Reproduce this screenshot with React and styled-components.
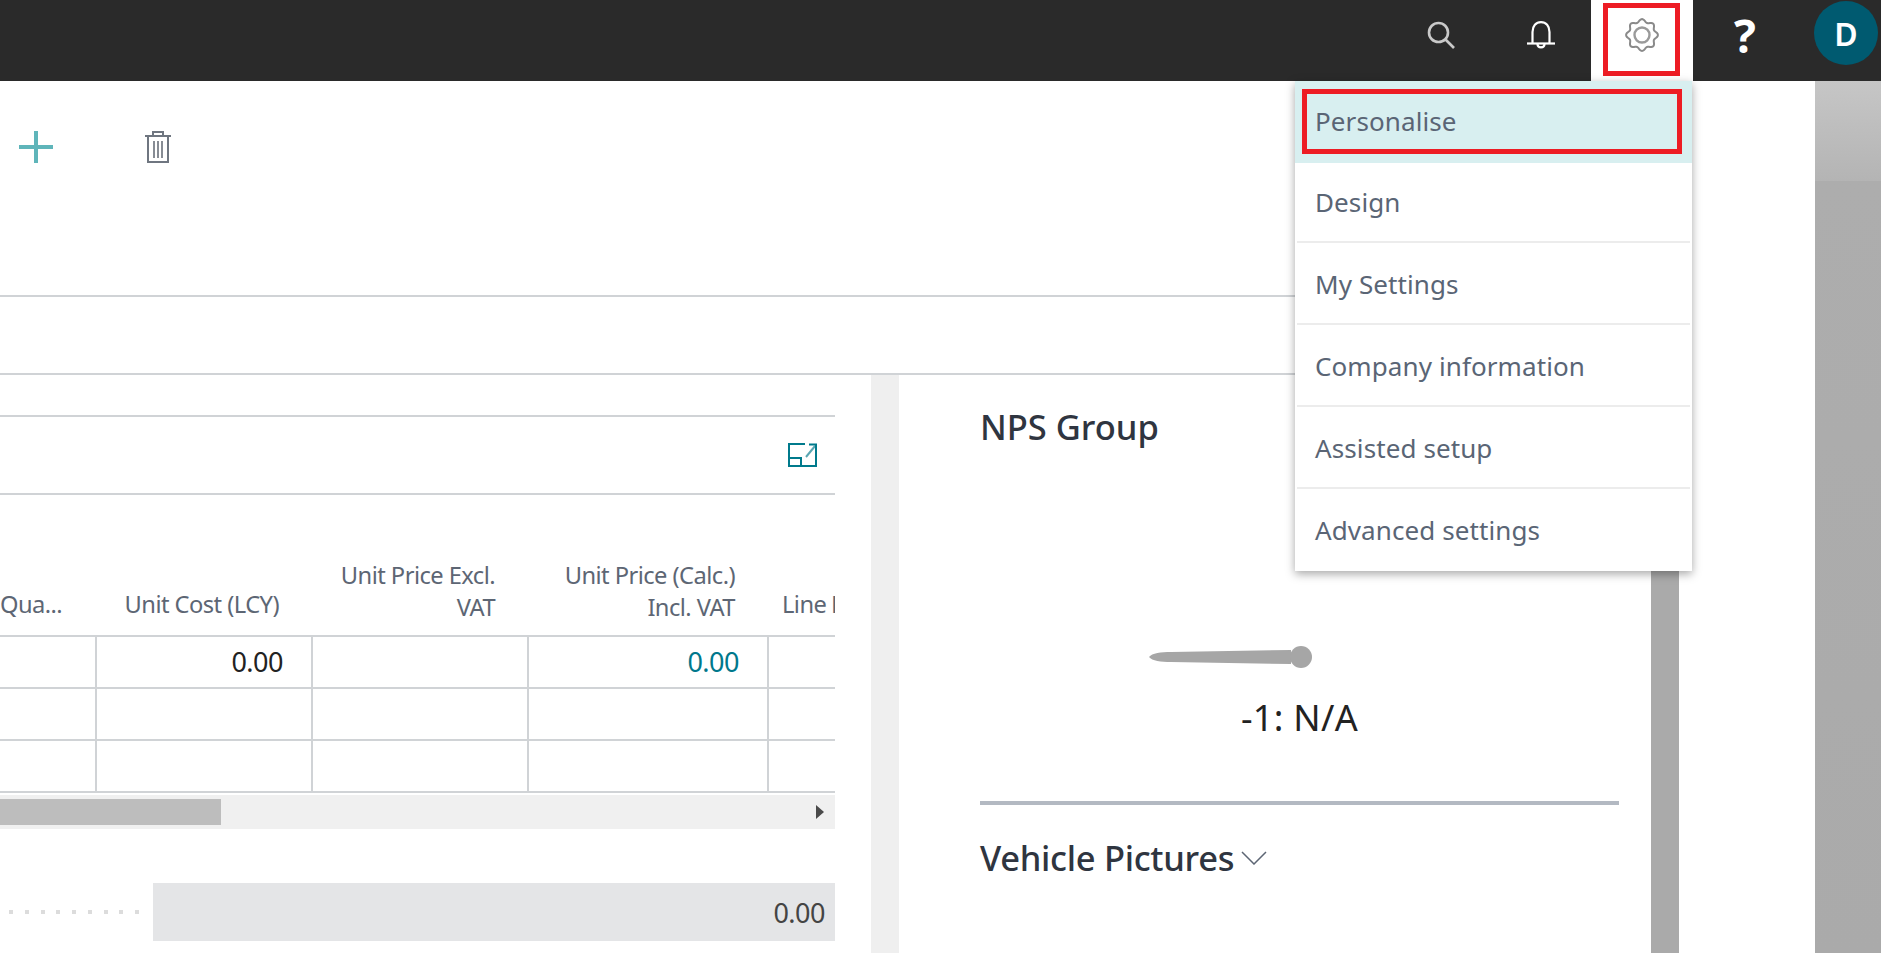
import React from "react";
import styled, { createGlobalStyle } from "styled-components";

const GlobalStyle = createGlobalStyle`
  html, body {
    margin: 0;
    padding: 0;
    background: #fff;
    overflow: hidden;
  }
  * { box-sizing: border-box; }
`;

const FONT = `"Noto Sans", "Open Sans", "Liberation Sans", sans-serif`;

const Page = styled.div`
  position: relative;
  width: 1881px;
  height: 953px;
  overflow: hidden;
  font-family: ${FONT};
  display: flex;
  flex-direction: column;
`;

// top bar
const TopBar = styled.header`
  height: 81px;
  flex: none;
  background: #2a2a2a;
  display: flex;
  justify-content: flex-end;
`;

const BarCell = styled.div`
  width: ${(p) => p.$w}px;
  display: flex;
  align-items: center;
  justify-content: center;
  padding-bottom: 11px;
  position: relative;
  background: ${(p) => (p.$active ? "#fff" : "transparent")};
`;

const AvatarCell = styled.div`
  width: 86px;
  display: flex;
  align-items: flex-start;
  justify-content: flex-end;
  padding: 1px 3px 0 0;
`;

const HelpMark = styled.span`
  color: #fff;
  font-family: "Open Sans", sans-serif;
  font-size: 46px;
  font-weight: 700;
  line-height: 1;
  margin-left: 2px;
`;

const Avatar = styled.div`
  width: 64px;
  height: 64px;
  border-radius: 50%;
  background: #005a70;
  color: #fff;
  font-size: 32px;
  font-weight: 600;
  display: flex;
  align-items: center;
  justify-content: center;
`;

const RedBox = styled.div`
  position: absolute;
  top: ${(p) => p.$top}px;
  left: ${(p) => p.$left}px;
  width: ${(p) => p.$w}px;
  height: ${(p) => p.$h}px;
  border: 5px solid #ed1c24;
  pointer-events: none;
`;

// page body
const Body = styled.div`
  flex: 1;
  display: flex;
  min-height: 0;
`;

const Workspace = styled.div`
  width: 1815px;
  flex: none;
  display: flex;
  flex-direction: column;
`;

const SideStrip = styled.div`
  flex: 1;
  background: linear-gradient(180deg, #c6c6c6 0, #b4b4b4 100px, #adadad 100px, #aaaaaa 100%);
`;

const ActionBar = styled.div`
  width: 1679px;
  height: 216px;
  flex: none;
  border-bottom: 2px solid #d0d3d6;
  display: flex;
  align-items: flex-start;
  padding: 50px 0 0 19px;
  gap: 90px;
`;

const SubBar = styled.div`
  width: 1679px;
  height: 78px;
  flex: none;
  border-bottom: 2px solid #d0d3d6;
`;

const Columns = styled.div`
  flex: 1;
  display: flex;
  min-height: 0;
`;

const LeftPane = styled.div`
  width: 871px;
  flex: none;
  padding: 40px 36px 0 0;
`;

const Gutter = styled.div`
  width: 28px;
  flex: none;
  background: #efefef;
`;

const RightPane = styled.div`
  width: 752px;
  flex: none;
  padding: 30px 32px 0 81px;
  display: flex;
  flex-direction: column;
`;

const PaneScroll = styled.div`
  width: 28px;
  flex: none;
  background: #aaaaaa;
`;

// lines section
const SectionHead = styled.div`
  height: 80px;
  border-top: 2px solid #d0d3d6;
  border-bottom: 2px solid #d0d3d6;
  display: flex;
  align-items: center;
  justify-content: flex-end;
  padding: 0 18px 0 0;
`;

const LinesGrid = styled.div`
  display: grid;
  grid-template-columns: 97px 216px 216px 240px 66px;
  overflow: hidden;
`;

const HeadCell = styled.div`
  height: 142px;
  border-bottom: 2px solid #d0d3d6;
  display: flex;
  align-items: flex-end;
  justify-content: ${(p) => (p.$left ? "flex-start" : "flex-end")};
  text-align: ${(p) => (p.$left ? "left" : "right")};
  white-space: nowrap;
  overflow: hidden;
  padding: 0 ${(p) => (p.$left ? 0 : 34)}px ${(p) => (p.$single ? 15 : 12)}px ${(p) => p.$pl || 0}px;
  font-size: 23.7px;
  line-height: 32px;
  color: #5d6674;
  letter-spacing: -0.55px;
  word-spacing: ${(p) => (p.$left ? -1 : 0)}px;
`;

const Cell = styled.div`
  height: 52px;
  border-bottom: 2px solid #d0d3d6;
  border-right: ${(p) => (p.$last ? "none" : "2px solid #d0d3d6")};
  display: flex;
  align-items: center;
  justify-content: flex-end;
  padding: 0 28px 2px 0;
  font-size: 27px;
  letter-spacing: -0.5px;
  color: ${(p) => (p.$link ? "#00788c" : "#222")};
`;

const HScroll = styled.div`
  height: 34px;
  margin-top: 2px;
  background: #f0f0f0;
  display: flex;
  align-items: center;
  justify-content: space-between;
  padding-right: 11px;
`;

const HThumb = styled.div`
  width: 221px;
  height: 26px;
  background: #bdbdbd;
`;

const ArrowRight = styled.div`
  width: 0;
  height: 0;
  border-top: 7px solid transparent;
  border-bottom: 7px solid transparent;
  border-left: 8px solid #4a4a4a;
`;

const TotalRow = styled.div`
  margin-top: 54px;
  display: flex;
  align-items: center;
`;

const Dots = styled.div`
  width: 153px;
  padding: 0 14px 0 9px;
  height: 4px;
  display: flex;
  justify-content: space-between;
`;

const Dot = styled.span`
  width: 4px;
  height: 4px;
  background: #dcdcdc;
`;

const TotalField = styled.div`
  flex: 1;
  height: 58px;
  background: #e4e5e7;
  display: flex;
  align-items: center;
  justify-content: flex-end;
  padding-right: 10px;
  font-size: 27px;
  letter-spacing: -0.5px;
  color: #444;
`;

// right pane
const PaneTitle = styled.div`
  font-size: 34.5px;
  line-height: 44px;
  font-weight: 500;
  color: #2f3540;
  display: flex;
  align-items: center;
  gap: 7px;
  letter-spacing: ${(p) => (p.$tight ? -0.3 : 0)}px;
`;

const GaugeBlock = styled.div`
  margin-top: 195px;
  display: flex;
  flex-direction: column;
  align-items: center;
`;

const GaugeValue = styled.div`
  margin-top: 24px;
  font-size: 36px;
  line-height: 48px;
  letter-spacing: 0.3px;
  color: #222;
`;

const PaneRule = styled.div`
  height: 4px;
  margin-top: 59px;
  margin-bottom: 31px;
  background: #b3b9c2;
`;

// settings menu
const Menu = styled.div`
  position: absolute;
  top: 81px;
  left: 1295px;
  width: 397px;
  height: 490px;
  background: #fff;
  box-shadow: 0 3px 9px rgba(0, 0, 0, 0.35);
  display: flex;
  flex-direction: column;
`;

const MenuItem = styled.div`
  height: ${(p) => p.$h}px;
  display: flex;
  align-items: center;
  padding-left: 20px;
  padding-bottom: ${(p) => p.$pb}px;
  font-size: 26px;
  letter-spacing: 0.1px;
  color: #5a6575;
  position: relative;
  background: ${(p) => (p.$active ? "#d8eff0" : "transparent")};

  &::after {
    content: "";
    display: ${(p) => (p.$noLine ? "none" : "block")};
    position: absolute;
    left: 2px;
    right: 2px;
    bottom: 0;
    height: 2px;
    background: #ececec;
  }
`;

const gearPath = (() => {
  const pts = [];
  for (let i = 0; i < 96; i++) {
    const a = (i / 96) * Math.PI * 2;
    const r = 14.4 + 1.5 * Math.cos(8 * a);
    pts.push(`${(17 + r * Math.sin(a)).toFixed(2)} ${(17 - r * Math.cos(a)).toFixed(2)}`);
  }
  return `M${pts.join("L")}Z`;
})();

const SearchIcon = () => (
  <svg width="28" height="28" viewBox="0 0 28 28" fill="none" stroke="#c9c9c9" strokeWidth="2.6">
    <circle cx="11.5" cy="11.5" r="9.5" />
    <path d="M18.5 18.5 L27 27" />
  </svg>
);

const BellIcon = () => (
  <svg width="28" height="28" viewBox="0 0 28 28" fill="none" stroke="#fff" strokeWidth="2.2">
    <path d="M5.5 22 V11 C5.5 5 9 1.2 14 1.2 C19 1.2 22.5 5 22.5 11 V22" />
    <path d="M0 22.5 H28" />
    <path d="M10.5 23 C10.5 27.5 17.5 27.5 17.5 23" />
  </svg>
);

const GearIcon = () => (
  <svg width="34" height="34" viewBox="0 0 34 34" fill="none" stroke="#8a8a8a" strokeWidth="2">
    <path d={gearPath} />
    <circle cx="17" cy="17" r="7.5" stroke="#9a9a9a" strokeWidth="2.4" />
  </svg>
);

const PlusIcon = () => (
  <svg width="34" height="32" viewBox="0 0 34 32" fill="none" stroke="#5fb5ba" strokeWidth="4">
    <path d="M17 0 V32" />
    <path d="M0 16 H34" />
  </svg>
);

const TrashIcon = () => (
  <svg width="30" height="32" viewBox="0 0 30 32" fill="none" stroke="#6f7680" strokeWidth="2">
    <path d="M2 5 H28" />
    <path d="M10 5 V1 H20 V5" />
    <path d="M5 5 V31 H25 V5" />
    <path d="M11 10 V27 M15 10 V27 M19 10 V27" stroke="#878c94" />
  </svg>
);

const ExpandIcon = () => (
  <svg width="29" height="24" viewBox="0 0 29 24" fill="none" stroke="#007a8c" strokeWidth="2">
    <path d="M17 1 H1 V23 H28 V7" />
    <path d="M1 15 H13 V23" />
    <path d="M18 14 L27 3" stroke="#5aa6b2" />
    <path d="M21 1.5 H28 V7" />
  </svg>
);

// needle rests at -1, so it only fills the left half around the hub
const Gauge = () => (
  <svg width="326" height="26" viewBox="0 0 326 26">
    <path d="M12 13 C15 9 24 8 34 8 L154 6 V20 L34 18 C24 18 15 17 12 13 Z" fill="#a6a6a6" />
    <circle cx="164" cy="13" r="11" fill="#a6a6a6" />
  </svg>
);

const Chevron = () => (
  <svg width="26" height="14" viewBox="0 0 26 14" fill="none" stroke="#5d6674" strokeWidth="1.5">
    <path d="M1 1 L13 13 L25 1" />
  </svg>
);

const menuItems = [
  { label: "Personalise", h: 82, pb: 2 },
  { label: "Design", h: 80, pb: 2 },
  { label: "My Settings", h: 82, pb: 0 },
  { label: "Company information", h: 82, pb: 0 },
  { label: "Assisted setup", h: 82, pb: 0 },
  { label: "Advanced settings", h: 82, pb: 0 },
];

export default function App() {
  return (
    <Page>
      <GlobalStyle />
      <TopBar>
        <BarCell $w={100}><SearchIcon /></BarCell>
        <BarCell $w={100}><BellIcon /></BarCell>
        <BarCell $w={102} $active>
          <GearIcon />
          <RedBox $top={3} $left={12} $w={77} $h={73} />
        </BarCell>
        <BarCell $w={102}><HelpMark>?</HelpMark></BarCell>
        <AvatarCell><Avatar>D</Avatar></AvatarCell>
      </TopBar>

      <Body>
        <Workspace>
          <ActionBar>
            <PlusIcon />
            <TrashIcon />
          </ActionBar>
          <SubBar />
          <Columns>
            <LeftPane>
              <SectionHead><ExpandIcon /></SectionHead>
              <LinesGrid>
                <HeadCell $left $single>Qua...</HeadCell>
                <HeadCell $single>Unit Cost (LCY)</HeadCell>
                <HeadCell>Unit Price Excl.<br />VAT</HeadCell>
                <HeadCell>Unit Price (Calc.)<br />Incl. VAT</HeadCell>
                <HeadCell $left $single $pl={13}>Line Disc</HeadCell>

                <Cell />
                <Cell>0.00</Cell>
                <Cell />
                <Cell $link>0.00</Cell>
                <Cell $last />

                <Cell />
                <Cell />
                <Cell />
                <Cell />
                <Cell $last />

                <Cell />
                <Cell />
                <Cell />
                <Cell />
                <Cell $last />
              </LinesGrid>
              <HScroll>
                <HThumb />
                <ArrowRight />
              </HScroll>
              <TotalRow>
                <Dots>
                  {Array.from({ length: 9 }, (_, i) => <Dot key={i} />)}
                </Dots>
                <TotalField>0.00</TotalField>
              </TotalRow>
            </LeftPane>
            <Gutter />
            <RightPane>
              <PaneTitle>NPS Group</PaneTitle>
              <GaugeBlock>
                <Gauge />
                <GaugeValue>-1: N/A</GaugeValue>
              </GaugeBlock>
              <PaneRule />
              <PaneTitle $tight>Vehicle Pictures<Chevron /></PaneTitle>
            </RightPane>
            <PaneScroll />
          </Columns>
        </Workspace>
        <SideStrip />
      </Body>

      <Menu>
        {menuItems.map((item, i) => (
          <MenuItem key={item.label} $h={item.h} $pb={item.pb} $active={i === 0} $noLine={i === 0 || i === menuItems.length - 1}>
            {item.label}
            {i === 0 && <RedBox $top={8} $left={7} $w={380} $h={65} />}
          </MenuItem>
        ))}
      </Menu>
    </Page>
  );
}
